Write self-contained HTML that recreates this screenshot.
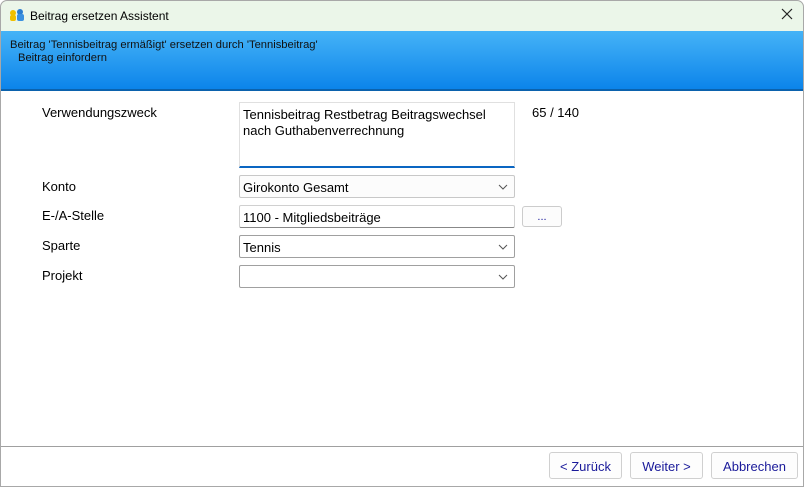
<!DOCTYPE html>
<html><head><style>
*{margin:0;padding:0;box-sizing:border-box}
body{width:804px;height:487px;overflow:hidden;background:#fff;font-family:"Liberation Sans",Arial,sans-serif;position:relative}
.win{position:absolute;left:0;top:0;width:804px;height:487px;border-radius:7px 7px 0 0;overflow:hidden;background:#fff}
.frame{position:absolute;left:0;top:0;width:804px;height:487px;border:1px solid #a8a8a8;border-radius:7px 7px 0 0;pointer-events:none}
.title{position:absolute;left:0;top:0;width:804px;height:31px;background:#ebf6e9}
.title span{position:absolute;left:30px;top:9px;font-size:12px;color:#000}
.close{position:absolute;left:781px;top:8px}
.hdr{position:absolute;left:0;top:31px;width:804px;height:60px;background:linear-gradient(#45b3f7,#0c84ea);border-bottom:2px solid #0b62ad}
.hdr div{position:absolute;font-size:11.2px;color:#111}
.lbl{position:absolute;left:42px;font-size:13px;color:#000}
.box{position:absolute;left:239px;width:276px;height:23px;border:1px solid #a0a0a0;border-radius:2px;background:#fff;font-size:13px;padding:4px 0 0 3px;color:#000}
.box.cb{background:#fcfcfc;border-color:#c8c8c8}
.chev{position:absolute;right:6px;top:8px}
.foot{position:absolute;left:0;top:446px;width:804px;border-top:1px solid #a0a0a0}
.btn{position:absolute;top:452px;height:27px;border:1px solid #d0d0d0;border-radius:3px;background:#fdfdfd;font-size:13px;color:#1a1a9a;text-align:center;padding-top:6px}
</style></head><body><div class="win">
<div class="title">
<svg style="position:absolute;left:9px;top:8px" width="16" height="14"><circle cx="4" cy="5" r="3" fill="#f0c000"/><rect x="1" y="7" width="6" height="6" rx="2" fill="#f0c000"/><circle cx="11" cy="4" r="3" fill="#2a7cd0"/><rect x="8" y="6" width="7" height="7" rx="2" fill="#3a90e0"/></svg>
<span>Beitrag ersetzen Assistent</span>
<svg class="close" width="12" height="12"><path d="M1 1L11 11M11 1L1 11" stroke="#222" stroke-width="1.2"/></svg>
</div>
<div class="hdr"><div style="left:10px;top:8px">Beitrag 'Tennisbeitrag ermäßigt' ersetzen durch 'Tennisbeitrag'</div><div style="left:18px;top:21px">Beitrag einfordern</div></div>
<div class="lbl" style="top:105px">Verwendungszweck</div>
<div style="position:absolute;left:239px;top:102px;width:276px;height:66px;border:1px solid #e0e0e0;border-bottom:2px solid #0a66c2;font-size:13px;padding:4px 0 0 3px;line-height:16px">Tennisbeitrag Restbetrag Beitragswechsel<br>nach Guthabenverrechnung</div>
<div style="position:absolute;left:532px;top:105px;font-size:13px">65 / 140</div>
<div class="lbl" style="top:179px">Konto</div>
<div class="box cb" style="top:175px">Girokonto Gesamt<svg class="chev" width="10" height="6"><path d="M1 1L5 5L9 1" stroke="#555" fill="none"/></svg></div>
<div class="lbl" style="top:208px">E-/A-Stelle</div>
<div class="box" style="top:205px;border-color:#d0d0d0;border-bottom-color:#888">1100 - Mitgliedsbeiträge</div>
<div style="position:absolute;left:522px;top:206px;width:40px;height:21px;border:1px solid #ccc;border-radius:3px;background:#fcfcfc;font-size:11px;text-align:center;padding-top:4px;color:#1a1a9a">...</div>
<div class="lbl" style="top:238px">Sparte</div>
<div class="box" style="top:235px">Tennis<svg class="chev" width="10" height="6"><path d="M1 1L5 5L9 1" stroke="#555" fill="none"/></svg></div>
<div class="lbl" style="top:268px">Projekt</div>
<div class="box" style="top:265px"><svg class="chev" width="10" height="6"><path d="M1 1L5 5L9 1" stroke="#555" fill="none"/></svg></div>
<div class="foot"></div>
<div class="btn" style="left:549px;width:73px">&lt; Zurück</div>
<div class="btn" style="left:630px;width:73px">Weiter &gt;</div>
<div class="btn" style="left:711px;width:87px">Abbrechen</div>
</div><div class="frame"></div></body></html>
